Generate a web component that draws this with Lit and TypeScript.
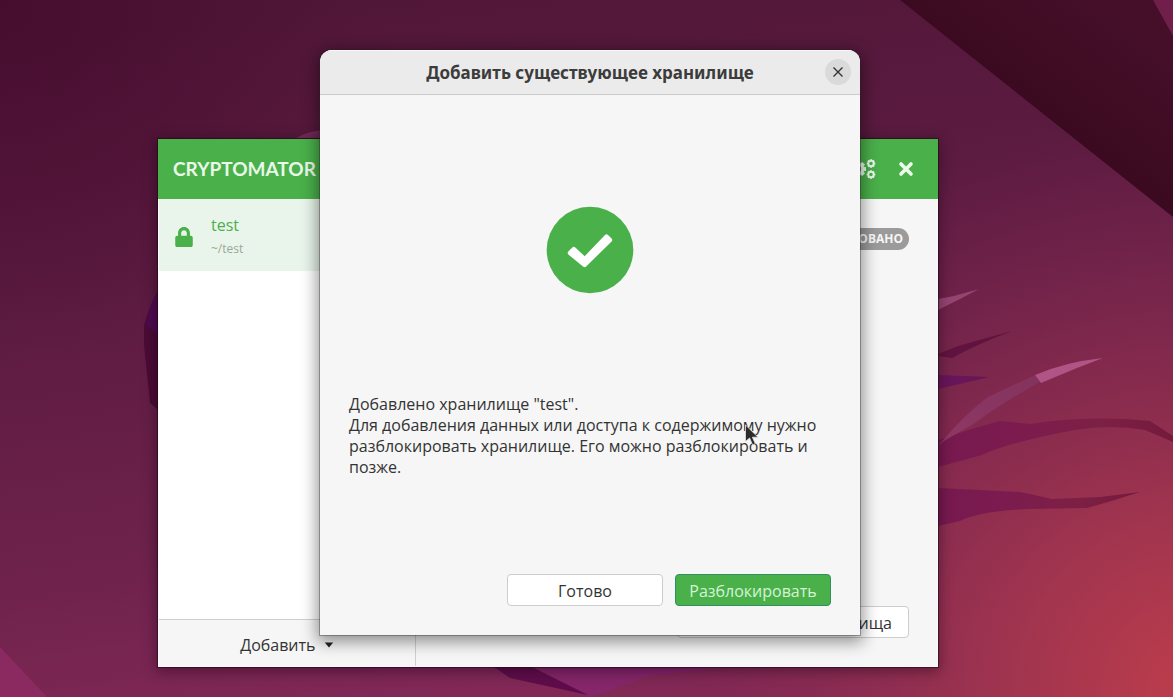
import { LitElement, html, css, svg } from "lit";
import { customElement, property } from "lit/decorators.js";

const cogTeeth = [0, 45, 90, 135];
const cog = (cx: number, cy: number, r: number) => svg`
  <g transform="translate(${cx} ${cy})">
    ${cogTeeth.map(
      (a) => svg`<rect x=${-r} y=${-r * 0.26} width=${r * 2} height=${r * 0.52} rx="0.4" transform="rotate(${a})" fill="currentColor" />`
    )}
    <circle r=${r * 0.8} fill="currentColor" />
    <circle r=${r * 0.4} fill="#49b04a" />
  </g>`;

@customElement("desk-wallpaper")
export class DeskWallpaper extends LitElement {
  static styles = css`
    :host { display: block; }
    .art { display: block; width: 100%; height: 100%; }
  `;
  render() {
    return html`<svg class="art" viewBox="0 0 1173 697" preserveAspectRatio="none" aria-hidden="true">
      <defs>
        <linearGradient id="base" gradientUnits="userSpaceOnUse" x1="350" y1="0" x2="450" y2="697">
          <stop offset="0" stop-color="#511738" />
          <stop offset="0.35" stop-color="#5c1b41" />
          <stop offset="0.75" stop-color="#6e224c" />
          <stop offset="1" stop-color="#812857" />
        </linearGradient>
        <radialGradient id="glow" gradientUnits="userSpaceOnUse" cx="1190" cy="690" r="580">
          <stop offset="0" stop-color="#bd3d4b" />
          <stop offset="0.3" stop-color="#a5364e" stop-opacity="0.9" />
          <stop offset="0.6" stop-color="#902e4f" stop-opacity="0.6" />
          <stop offset="1" stop-color="#7c254e" stop-opacity="0" />
        </radialGradient>
        <radialGradient id="shade" gradientUnits="userSpaceOnUse" cx="0" cy="0" r="360">
          <stop offset="0" stop-color="#43092c" stop-opacity="0.7" />
          <stop offset="1" stop-color="#43092c" stop-opacity="0" />
        </radialGradient>
        <linearGradient id="fold" gradientUnits="userSpaceOnUse" x1="1037" y1="108" x2="1110" y2="10">
          <stop offset="0" stop-color="#3b0a20" />
          <stop offset="1" stop-color="#450f29" />
        </linearGradient>
        <linearGradient id="leafA" x1="0" x2="1" y1="0" y2="0">
          <stop offset="0" stop-color="#77194f" />
          <stop offset="0.3" stop-color="#7b1b50" />
          <stop offset="0.7" stop-color="#7d2044" />
          <stop offset="1" stop-color="#741a3c" />
        </linearGradient>
        <linearGradient id="stem" x1="0" x2="1" y1="1" y2="0">
          <stop offset="0" stop-color="#8f3866" />
          <stop offset="1" stop-color="#83335e" />
        </linearGradient>
      </defs>
      <rect width="1173" height="697" fill="url(#base)" />
      <rect width="1173" height="697" fill="url(#shade)" />
      <rect width="1173" height="697" fill="url(#glow)" />
      <path d="M900 0L1173 217V0Z" fill="url(#fold)" />
      <path d="M1153 0L1173 36V0Z" fill="#701f4b" />
      <path d="M0 647L47 697H0Z" fill="#8b2a61" />
      <path d="M296 138Q306 132 322 130V138Z" fill="#7a2b5b" />
      <path d="M158 290L150 307L144 325V345L150 403L158 410Z" fill="#4b0b35" />
      <path d="M158 290L150 307L146 325L158 335Z" fill="#4e0a50" />
      <path d="M500 667L590 697L650 676L730 667Z" fill="#842669" />
      <path d="M494 667H532L588 695L510 678Z" fill="#5f0d4a" />
      <path d="M938 299L954 296L979 289L960 299L938 310Z" fill="#954572" />
      <path d="M938 354L958 346L1012 331Q975 345 952 358L938 356Z" fill="#611340" />
      <path d="M938 375L989 377L938 389Z" fill="#68155a" />
      <path d="M938 440L975 428L1000 421L1030 424Q1090 415 1150 421L1173 436V442L1145 430Q1110 424 1075 430Q1010 442 982 455L938 467Z" fill="url(#leafA)" />
      <path d="M938 446Q965 414 988 397L1035 375L1040 382Q1000 404 975 423L944 441Z" fill="url(#stem)" />
      <path d="M1035 375Q1065 362 1103 358L1077 368L1041 383Z" fill="#b05486" />
      <path d="M938 488L980 490L1020 492Q1035 495 1052 499L1100 497L1140 492L1108 502L1087 508L1030 509Q980 511 960 521L938 526Z" fill="url(#leafA)" />
    </svg>`;
  }
}

@customElement("vault-window")
export class VaultWindow extends LitElement {
  static styles = css`
    :host {
      display: flex;
      flex-direction: column;
      box-sizing: border-box;
      background: #f6f6f6;
      color: #333;
      border: 1px solid #fafafa;
      border-top: 0;
      font: 16px/21px "Open Sans", "Noto Sans", sans-serif;
      box-shadow: 0 0 0 1px rgba(30, 5, 20, 0.55), 0 3px 12px 2px rgba(20, 0, 15, 0.4);
    }
    button { font: inherit; color: inherit; margin: 0; }
    .bar {
      display: flex;
      align-items: center;
      justify-content: space-between;
      height: 60px;
      margin: 0 -1px;
      padding: 0 24px 0 15px;
      background: #49b04a;
      color: #e9f8e9;
    }
    .brand { margin: 0; font: 700 19px/24px Lato, sans-serif; }
    .tools { display: flex; align-items: center; gap: 22px; }
    .tool { display: flex; padding: 0; border: 0; background: none; color: #edf9ed; }
    .main { display: flex; flex: 1; min-height: 0; }
    .side {
      display: flex;
      flex-direction: column;
      box-sizing: border-box;
      flex: 0 0 33%;
      border-right: 1px solid #d0d0d0;
      background: #fff;
    }
    .vaults { flex: 1; margin: 0; padding: 0; list-style: none; }
    .vault {
      display: grid;
      grid-template-columns: 52px 1fr;
      align-items: center;
      width: 100%;
      height: 72px;
      padding: 3px 0 0;
      border: 0;
      background: #e9f5ea;
      text-align: left;
    }
    .lock { display: block; margin-left: 16px; color: #49b04a; }
    .name { display: block; line-height: 24px; font-size: 16px; color: #4bb04e; }
    .path { display: block; line-height: 24px; font-size: 12px; color: #9aa79b; }
    .add {
      display: flex;
      align-items: center;
      justify-content: center;
      gap: 8px;
      height: 47px;
      padding: 4px 0 0;
      border: 0;
      border-top: 1px solid #cfcfcf;
      background: #f6f6f6;
    }
    .detail {
      display: flex;
      flex-direction: column;
      flex: 1;
      align-items: flex-end;
      justify-content: space-between;
      padding: 29px 28px 28px;
    }
    .state {
      padding: 0 6px 0 8px;
      border-radius: 11px;
      background: #9b9b9b;
      color: #f6f6f6;
      font-size: 12px;
      line-height: 22px;
      font-weight: 700;
    }
    .options {
      box-sizing: border-box;
      height: 32px;
      min-width: 232px;
      padding: 2px 16px 0;
      border: 1px solid #cdcdcd;
      border-radius: 4px;
      background: #fff;
      text-align: right;
    }
  `;
  render() {
    return html`
      <header class="bar">
        <h1 class="brand">CRYPTOMATOR</h1>
        <div class="tools">
          <button class="tool" aria-label="Настройки">
            <svg width="26" height="22" viewBox="0 0 26 22">${cog(8, 11, 8)}${cog(21, 5.5, 4.3)}${cog(21, 16.5, 4.3)}</svg>
          </button>
          <button class="tool" aria-label="Закрыть">
            <svg width="16" height="16" viewBox="0 0 16 16"><path d="M3 3L13 13M13 3L3 13" stroke="currentColor" stroke-width="3.6" stroke-linecap="round" /></svg>
          </button>
        </div>
      </header>
      <div class="main">
        <nav class="side">
          <ul class="vaults">
            <li>
              <button class="vault">
                <svg class="lock" width="18" height="20" viewBox="0 0 448 512"><path fill="currentColor" d="M400 224h-24v-72C376 68.2 307.8 0 224 0S72 68.2 72 152v72H48c-26.5 0-48 21.5-48 48v192c0 26.5 21.5 48 48 48h352c26.5 0 48-21.5 48-48V272c0-26.5-21.5-48-48-48zm-104 0H152v-72c0-39.7 32.3-72 72-72s72 32.3 72 72v72z" /></svg>
                <span><span class="name">test</span><span class="path">~/test</span></span>
              </button>
            </li>
          </ul>
          <button class="add">Добавить
            <svg width="10" height="6" viewBox="0 0 10 6"><path d="M0.8 0.5H9.2L5 5.6Z" fill="#222" /></svg>
          </button>
        </nav>
        <section class="detail">
          <span class="state">ЗАБЛОКИРОВАНО</span>
          <button class="options">Параметры хранилища</button>
        </section>
      </div>
    `;
  }
}

@customElement("add-dialog")
export class AddDialog extends LitElement {
  @property() vault = "test";

  static styles = css`
    :host {
      display: flex;
      flex-direction: column;
      box-sizing: border-box;
      overflow: hidden;
      border-radius: 12px 12px 0 0;
      background: #f6f6f6;
      color: #333;
      font: 16px/21px "Open Sans", "Noto Sans", sans-serif;
      box-shadow: 0 0 0 1px rgba(40, 30, 40, 0.35), 0 4px 16px 3px rgba(0, 0, 0, 0.42);
    }
    button { font: inherit; margin: 0; }
    .head {
      display: grid;
      grid-template-columns: 26px 1fr 26px;
      align-items: center;
      height: 44px;
      padding: 0 9px;
      border-bottom: 1px solid #cbcbcb;
      background: #ebebeb;
      box-shadow: inset 0 1px #f8f8f8;
    }
    .title { grid-column: 2; margin: 0; padding-top: 2px; text-align: center; font: 700 17px/24px "Noto Sans", sans-serif; color: #3c3c3c; }
    .close {
      display: grid;
      place-items: center;
      width: 26px;
      height: 26px;
      padding: 0;
      border: 0;
      border-radius: 50%;
      background: #dadada;
      color: #333;
    }
    .body { display: flex; flex-direction: column; flex: 1; padding: 0 29px 29px; }
    .sign { display: grid; place-items: center; box-sizing: border-box; height: 299px; padding-top: 11px; }
    .text { flex: 1; margin: 0; }
    .actions { display: flex; justify-content: flex-end; gap: 12px; }
    .btn {
      box-sizing: border-box;
      width: 156px;
      height: 32px;
      padding: 2px 0 0;
      border: 1px solid #cdcdcd;
      border-radius: 4px;
      background: #fff;
      color: #333;
    }
    .btn.primary { border-color: #2f8f63; background: #49b04a; color: #d6f3d6; }
  `;
  render() {
    return html`
      <header class="head">
        <h2 class="title">Добавить существующее хранилище</h2>
        <button class="close" aria-label="Закрыть">
          <svg width="12" height="12" viewBox="0 0 12 12"><path d="M1.5 1.5L10.5 10.5M10.5 1.5L1.5 10.5" stroke="currentColor" stroke-width="1.4" /></svg>
        </button>
      </header>
      <div class="body">
        <div class="sign">
          <svg width="88" height="88" viewBox="0 0 88 88" aria-hidden="true">
            <circle cx="44" cy="44" r="43.3" fill="#49b04a" />
            <path d="M22.3 45.6L26.3 41.5Q27.8 40.1 29.3 41.5L38.7 50.2L59 28.9Q60.5 27.4 62 28.9L65.6 32.6Q67 34 65.6 35.5L40.2 60.4Q38.6 61.9 37 60.4L22.3 48.5Q21 47.1 22.3 45.6Z" fill="#fff" />
          </svg>
        </div>
        <p class="text">Добавлено хранилище "${this.vault}".<br />Для добавления данных или доступа к содержимому нужно разблокировать хранилище. Его можно разблокировать и позже.</p>
        <div class="actions">
          <button class="btn">Готово</button>
          <button class="btn primary">Разблокировать</button>
        </div>
      </div>
    `;
  }
}

@customElement("app-root")
export class AppRoot extends LitElement {
  static styles = css`
    :host { display: block; position: relative; height: 100vh; overflow: hidden; }
    .wall { width: 100%; height: 100%; }
    .back { position: absolute; left: 158px; top: 139px; width: 780px; height: 528px; }
    .front { position: absolute; left: 320px; top: 50px; width: 540px; height: 585px; }
    .pointer { position: absolute; left: 744px; top: 424px; }
  `;
  render() {
    return html`
      <desk-wallpaper class="wall"></desk-wallpaper>
      <vault-window class="back"></vault-window>
      <add-dialog class="front" vault="test"></add-dialog>
      <svg class="pointer" width="16" height="24" viewBox="0 0 16 24" aria-hidden="true">
        <path d="M1.5 1V17.5L5.6 14L8.6 21L11.4 19.8L8.4 13.2H14Z" fill="#2b2b2b" stroke="#e4e4e4" stroke-width="0.8" />
      </svg>
    `;
  }
}
